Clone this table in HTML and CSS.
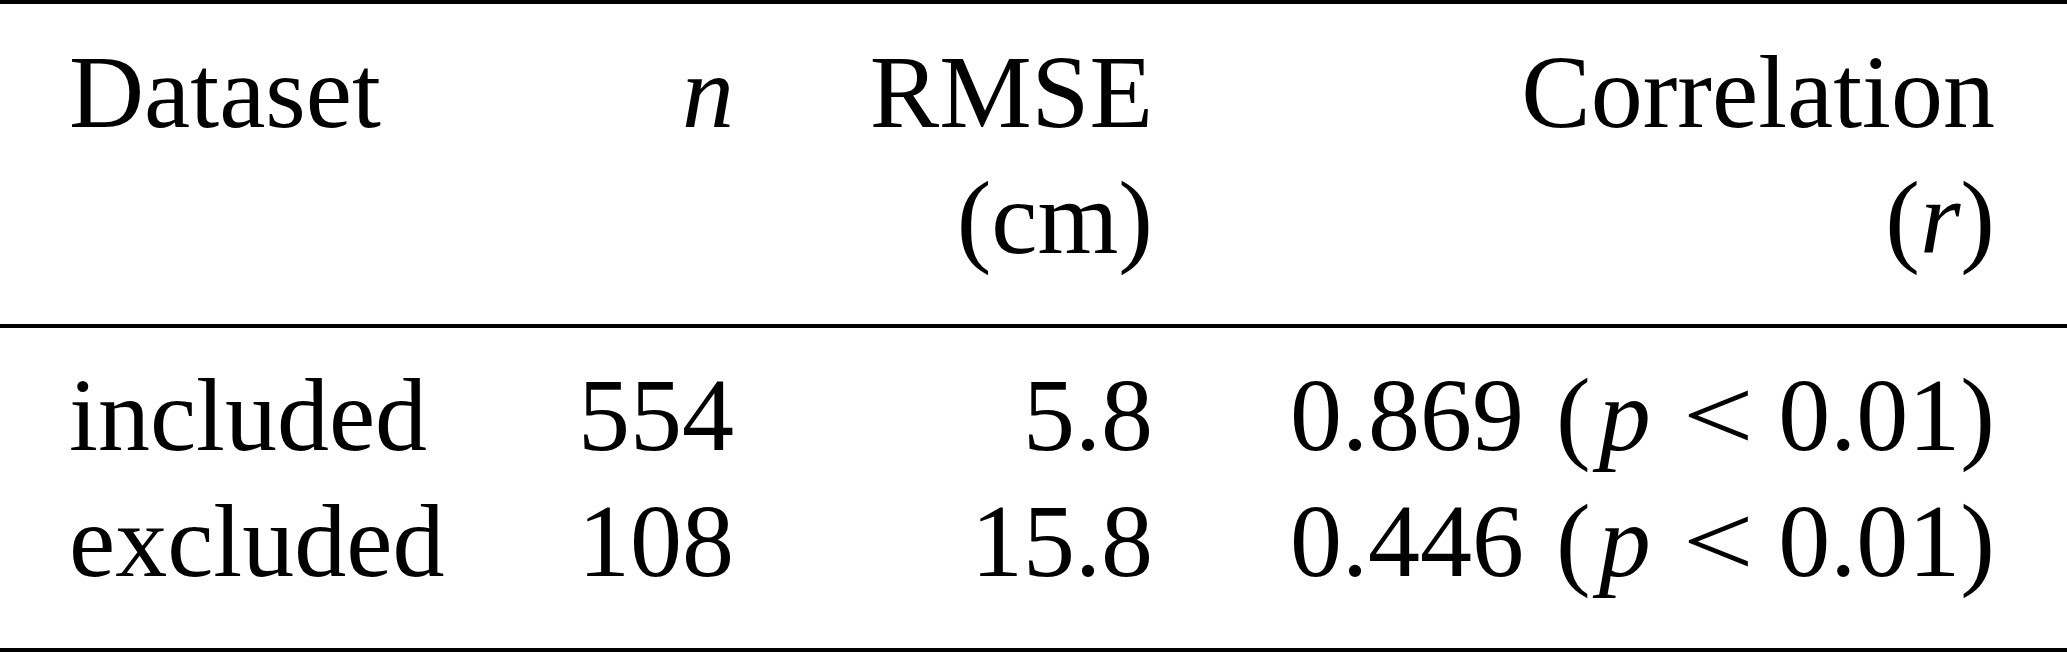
FILE: index.html
```html
<!DOCTYPE html>
<html lang="en">
<head>
<meta charset="utf-8">
<title>Dataset table</title>
<link rel="stylesheet" href="styles.css">
</head>
<body>
<table class="results">
  <colgroup>
    <col class="col-name">
    <col class="col-n">
    <col class="col-rmse">
    <col class="col-corr">
  </colgroup>
  <thead>
    <tr>
      <th class="c-name">Dataset</th>
      <th class="c-num"><i>n</i></th>
      <th class="c-num">RMSE<br>(cm)</th>
      <th class="c-num c-last">Correlation<br>(<i>r</i>)</th>
    </tr>
  </thead>
  <tbody>
    <tr class="row-first">
      <td class="c-name">included</td>
      <td class="c-num">554</td>
      <td class="c-num">5.8</td>
      <td class="c-num c-last">0.869 <span class="lp">(</span><i>p</i> <span class="rel">&lt;</span> 0.01)</td>
    </tr>
    <tr class="row-last">
      <td class="c-name">excluded</td>
      <td class="c-num">108</td>
      <td class="c-num">15.8</td>
      <td class="c-num c-last">0.446 <span class="lp">(</span><i>p</i> <span class="rel">&lt;</span> 0.01)</td>
    </tr>
  </tbody>
</table>
</body>
</html>
```

FILE: styles.css
```css
* {
  box-sizing: border-box;
}

html, body {
  margin: 0;
  padding: 0;
  background: #ffffff;
}

body {
  width: 2067px;
  height: 652px;
  overflow: hidden;
  font-family: "Liberation Serif", "Times New Roman", serif;
  color: #000000;
}

.results {
  width: 2067px;
  table-layout: fixed;
  border-collapse: separate;
  border-spacing: 0;
  font-size: 104px;
  line-height: 126px;
}

.col-name { width: 469px; }
.col-n { width: 265px; }
.col-rmse { width: 419px; }
.col-corr { width: 914px; }

.results th,
.results td {
  padding: 0;
  font-weight: normal;
  vertical-align: top;
  white-space: nowrap;
}

.c-name {
  text-align: left;
  padding-left: 69px !important;
}

.c-num {
  text-align: right;
}

.c-last {
  padding-right: 72px !important;
}

.results thead th {
  border-top: 4px solid #000000;
  border-bottom: 4px solid #000000;
  padding-top: 25px;
  padding-bottom: 43px;
}

.row-first td {
  padding-top: 24px;
}

.row-last td {
  padding-bottom: 44px;
  border-bottom: 4px solid #000000;
}

.results i {
  font-style: italic;
}

.lp {
  margin-left: 6px;
  margin-right: 8px;
}

.rel {
  display: inline-block;
  margin: 0 5px 0 12px;
  transform: scaleX(1.22);
}
```
